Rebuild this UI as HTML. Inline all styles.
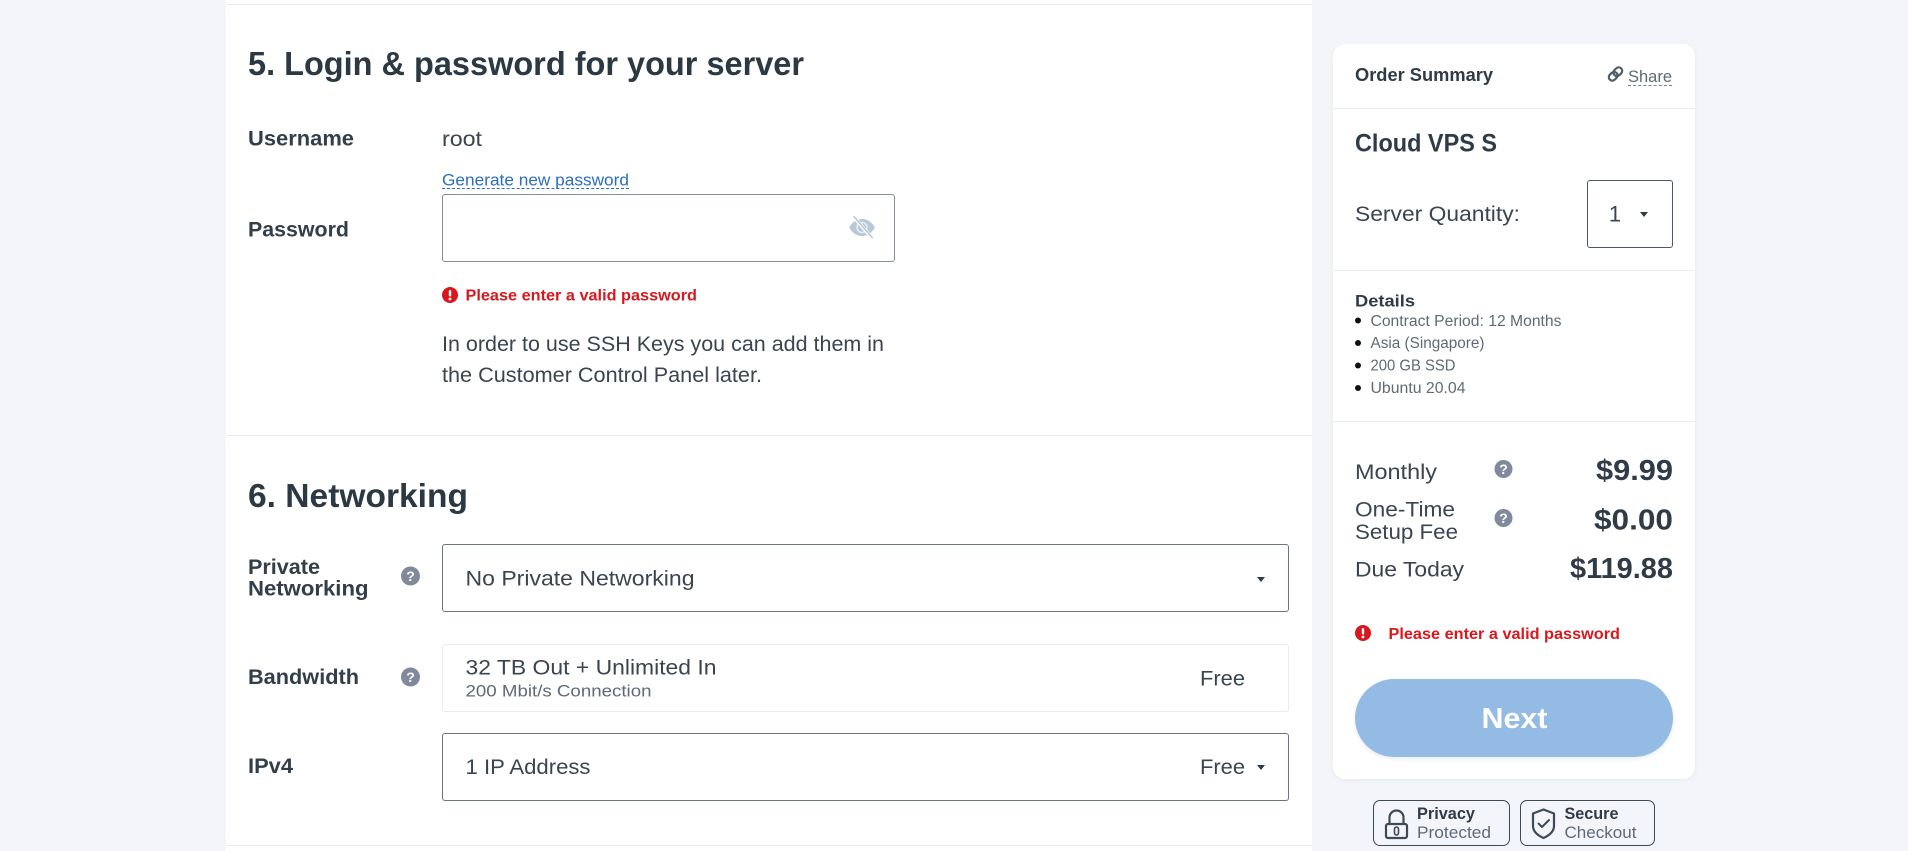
<!DOCTYPE html>
<html lang="en"><head><meta charset="utf-8"><title>Order</title>
<style>
html,body{margin:0;padding:0;width:1908px;height:851px;overflow:hidden;background:#f3f5fa}
.b{position:absolute;box-sizing:border-box}
svg.o{position:absolute;left:0;top:0}
text{font-family:"Liberation Sans",sans-serif;fill:#323e4a}
.s{font-weight:700;fill:#2f3b46}
.h{font-weight:700;font-size:33px;fill:#2b3943}
.l{font-weight:700;font-size:21px;fill:#323e49}
.r{font-size:21px;fill:#3a4551}
.g{fill:#5f6a76}
.e{font-size:16px;fill:#d9181e;font-weight:700}
</style></head><body>
<div class="b" style="left:226px;top:0;width:1086px;height:851px;background:#fff"></div>
<div class="b" style="left:226px;top:4px;width:1086px;height:1px;background:#e9edf2"></div>
<div class="b" style="left:226px;top:435px;width:1086px;height:1px;background:#e9edf2"></div>
<div class="b" style="left:226px;top:845px;width:1086px;height:1px;background:#e9edf2"></div>
<div class="b" style="left:442px;top:194px;width:453px;height:68px;border:1px solid #868f9e;border-radius:3px"></div>
<div class="b" style="left:442px;top:544px;width:847px;height:68px;border:1px solid #6a7482;border-radius:3px"></div>
<div class="b" style="left:442px;top:644px;width:847px;height:68px;border:1px solid #e9edf2;border-radius:3px"></div>
<div class="b" style="left:442px;top:733px;width:847px;height:68px;border:1px solid #6a7482;border-radius:3px"></div>

<div class="b" style="left:1333px;top:44px;width:362px;height:735px;background:#fff;border-radius:12px;box-shadow:0 1px 4px rgba(60,80,110,.08)"></div>
<div class="b" style="left:1333px;top:108px;width:362px;height:1px;background:#e9edf2"></div>
<div class="b" style="left:1333px;top:270px;width:362px;height:1px;background:#e9edf2"></div>
<div class="b" style="left:1333px;top:421px;width:362px;height:1px;background:#e9edf2"></div>
<div class="b" style="left:1587px;top:180px;width:86px;height:68px;border:1px solid #4c5866;border-radius:3px"></div>
<div class="b" style="left:1355px;top:679px;width:318px;height:78px;background:#94bbe3;border-radius:39px;box-shadow:0 2px 4px rgba(60,80,110,.10)"></div>
<div class="b" style="left:1373px;top:800px;width:137px;height:46px;border:1px solid #3f4a57;border-radius:7px"></div>
<div class="b" style="left:1520px;top:800px;width:135px;height:46px;border:1px solid #3f4a57;border-radius:7px"></div>
<div class="b" style="left:442px;top:188px;width:187px;height:0;border-top:1px dashed #2a6fc0"></div>
<div class="b" style="left:1628px;top:85px;width:44px;height:0;border-top:1px dashed #7a8490"></div>

<svg class="o" width="1908" height="851" viewBox="0 0 1908 851" xmlns="http://www.w3.org/2000/svg">
<text x="248" y="75" class="h" textLength="556" lengthAdjust="spacingAndGlyphs">5. Login &amp; password for your server</text>
<text x="248" y="145.5" class="l" textLength="106" lengthAdjust="spacingAndGlyphs">Username</text>
<text x="442" y="146" class="r" textLength="40" lengthAdjust="spacingAndGlyphs">root</text>
<text x="442" y="185.5" font-size="16.500" style="fill:#2a6fc0" textLength="187" lengthAdjust="spacingAndGlyphs">Generate new password</text>
<text x="248" y="236.5" class="l" textLength="101" lengthAdjust="spacingAndGlyphs">Password</text>
<text x="465.5" y="300.5" class="e" textLength="231.5" lengthAdjust="spacingAndGlyphs">Please enter a valid password</text>
<text x="442" y="351" class="r" textLength="442" lengthAdjust="spacingAndGlyphs">In order to use SSH Keys you can add them in</text>
<text x="442" y="382" class="r" textLength="320" lengthAdjust="spacingAndGlyphs">the Customer Control Panel later.</text>

<text x="248" y="507" class="h" textLength="220" lengthAdjust="spacingAndGlyphs">6. Networking</text>
<text x="248" y="574" class="l" textLength="72" lengthAdjust="spacingAndGlyphs">Private</text>
<text x="248" y="595.5" class="l" textLength="120.5" lengthAdjust="spacingAndGlyphs">Networking</text>
<text x="465.5" y="585.5" class="r" textLength="229" lengthAdjust="spacingAndGlyphs">No Private Networking</text>
<text x="248" y="684" class="l" textLength="111" lengthAdjust="spacingAndGlyphs">Bandwidth</text>
<text x="465.5" y="674.500" class="r" textLength="251" lengthAdjust="spacingAndGlyphs">32 TB Out + Unlimited In</text>
<text x="465.5" y="696.5" font-size="16.500" class="g" textLength="186" lengthAdjust="spacingAndGlyphs">200 Mbit/s Connection</text>
<text x="1200" y="685.5" class="r" textLength="45" lengthAdjust="spacingAndGlyphs">Free</text>
<text x="248" y="773" class="l" textLength="45" lengthAdjust="spacingAndGlyphs">IPv4</text>
<text x="465.5" y="774" class="r" textLength="125" lengthAdjust="spacingAndGlyphs">1 IP Address</text>
<text x="1200" y="774" class="r" textLength="45" lengthAdjust="spacingAndGlyphs">Free</text>

<path d="M1257 577h8l-4 5z" fill="#2f3b46"/>
<path d="M1257 765h8l-4 5z" fill="#2f3b46"/>

<!-- eye off -->
<g transform="translate(849,217)">
<path d="M0 10.5C4 4 8.5 2 13 2s9 2 13 8.5C22 17 17.500 19 13 19S4 17 0 10.500z" fill="#b9c8d5"/>
<circle cx="13" cy="10.500" r="5" fill="none" stroke="#e6ecf1" stroke-width="1.600"/>
<path d="M4 -1L23 21" stroke="#fff" stroke-width="3.500"/>
<path d="M4.500 -1L23.500 21" stroke="#b9c8d5" stroke-width="1.600"/>
</g>

<!-- alert icons -->
<circle cx="450" cy="295" r="8" fill="#d9181e"/><rect x="448.800" y="290" width="2.400" height="6.500" rx="1" fill="#fff"/><circle cx="450" cy="299" r="1.400" fill="#fff"/>
<circle cx="1363" cy="633" r="8" fill="#d9181e"/><rect x="1361.800" y="628" width="2.400" height="6.500" rx="1" fill="#fff"/><circle cx="1363" cy="637" r="1.400" fill="#fff"/>

<!-- help icons -->
<g font-size="14" font-weight="700" text-anchor="middle">
<circle cx="410.500" cy="576" r="9.500" fill="#818a9c"/><text x="410.500" y="581" style="fill:#fff">?</text>
<circle cx="410.500" cy="677" r="9.500" fill="#818a9c"/><text x="410.500" y="682" style="fill:#fff">?</text>
<circle cx="1503.500" cy="469" r="9" fill="#818a9c"/><text x="1503.500" y="474" style="fill:#fff">?</text>
<circle cx="1503.500" cy="518" r="9" fill="#818a9c"/><text x="1503.500" y="523" style="fill:#fff">?</text>
</g>

<!-- summary -->
<text x="1355" y="81" font-size="18" class="s" textLength="138" lengthAdjust="spacingAndGlyphs">Order Summary</text>
<g fill="none" stroke="#4f5b68" stroke-width="2.200" transform="rotate(-45 1615.500 74)">
<rect x="1607.500" y="70.500" width="9.500" height="7" rx="3.500"/>
<rect x="1614" y="70.500" width="9.500" height="7" rx="3.500"/>
</g>
<text x="1628" y="82" font-size="16.500" class="g" textLength="44" lengthAdjust="spacingAndGlyphs">Share</text>
<text x="1355" y="151.500" font-size="25" class="s" textLength="142" lengthAdjust="spacingAndGlyphs">Cloud VPS S</text>
<text x="1355" y="221" class="r" textLength="165" lengthAdjust="spacingAndGlyphs">Server Quantity:</text>
<text x="1615" y="221.500" font-size="22" style="fill:#3a4551" text-anchor="middle">1</text>
<path d="M1640 212h8l-4 5z" fill="#2f3b46"/>
<text x="1355" y="306.500" font-size="17" class="s" textLength="60" lengthAdjust="spacingAndGlyphs">Details</text>
<g fill="#111"><circle cx="1358" cy="320.500" r="3"/><circle cx="1358" cy="343" r="3"/><circle cx="1358" cy="365.500" r="3"/><circle cx="1358" cy="388" r="3"/></g>
<text x="1370.500" y="326" font-size="15.500" class="g" textLength="191" lengthAdjust="spacingAndGlyphs">Contract Period: 12 Months</text>
<text x="1370.500" y="348" font-size="15.500" class="g" textLength="114" lengthAdjust="spacingAndGlyphs">Asia (Singapore)</text>
<text x="1370.500" y="370.500" font-size="15.500" class="g" textLength="85" lengthAdjust="spacingAndGlyphs">200 GB SSD</text>
<text x="1370.500" y="393" font-size="15.500" class="g" textLength="95" lengthAdjust="spacingAndGlyphs">Ubuntu 20.04</text>

<text x="1355" y="479" class="r" textLength="82" lengthAdjust="spacingAndGlyphs">Monthly</text>
<text x="1596" y="480" font-size="29" class="s" textLength="77" lengthAdjust="spacingAndGlyphs">$9.99</text>
<text x="1355" y="516.500" class="r" textLength="100" lengthAdjust="spacingAndGlyphs">One-Time</text>
<text x="1355" y="539" class="r" textLength="103" lengthAdjust="spacingAndGlyphs">Setup Fee</text>
<text x="1594" y="529.500" font-size="29" class="s" textLength="79" lengthAdjust="spacingAndGlyphs">$0.00</text>
<text x="1355" y="576.500" class="r" textLength="109" lengthAdjust="spacingAndGlyphs">Due Today</text>
<text x="1570" y="578" font-size="29" class="s" textLength="103" lengthAdjust="spacingAndGlyphs">$119.88</text>
<text x="1388.500" y="639" class="e" textLength="231.500" lengthAdjust="spacingAndGlyphs">Please enter a valid password</text>
<text x="1481.500" y="728" font-size="29" font-weight="700" style="fill:#fff" textLength="66" lengthAdjust="spacingAndGlyphs">Next</text>

<!-- lock -->
<g fill="none" stroke="#3f4a57">
<rect x="1386" y="824" width="21" height="14" rx="2" stroke-width="2.200"/>
<path d="M1389.500 824v-6.500a7 7 0 0 1 14 0v6.500" stroke-width="2.200"/>
<rect x="1394.500" y="827" width="4" height="8" rx="2" stroke-width="1.600"/>
<!-- shield -->
<path d="M1533 813.500L1543.500 809.500L1554 813.500V826C1554 832 1549 835.500 1543.500 838C1538 835.500 1533 832 1533 826z" stroke-width="2.200" stroke-linejoin="round"/>
<path d="M1538.500 823.500l3.500 3.500 7-7" stroke-width="2" stroke-linecap="round" stroke-linejoin="round"/>
</g>
<text x="1417" y="819" font-size="16.500" class="s" textLength="58" lengthAdjust="spacingAndGlyphs">Privacy</text>
<text x="1417" y="838" font-size="16.500" class="g" textLength="74" lengthAdjust="spacingAndGlyphs">Protected</text>
<text x="1564.500" y="819" font-size="16.500" class="s" textLength="54" lengthAdjust="spacingAndGlyphs">Secure</text>
<text x="1564.500" y="838" font-size="16.500" class="g" textLength="72" lengthAdjust="spacingAndGlyphs">Checkout</text>
</svg>
</body></html>
